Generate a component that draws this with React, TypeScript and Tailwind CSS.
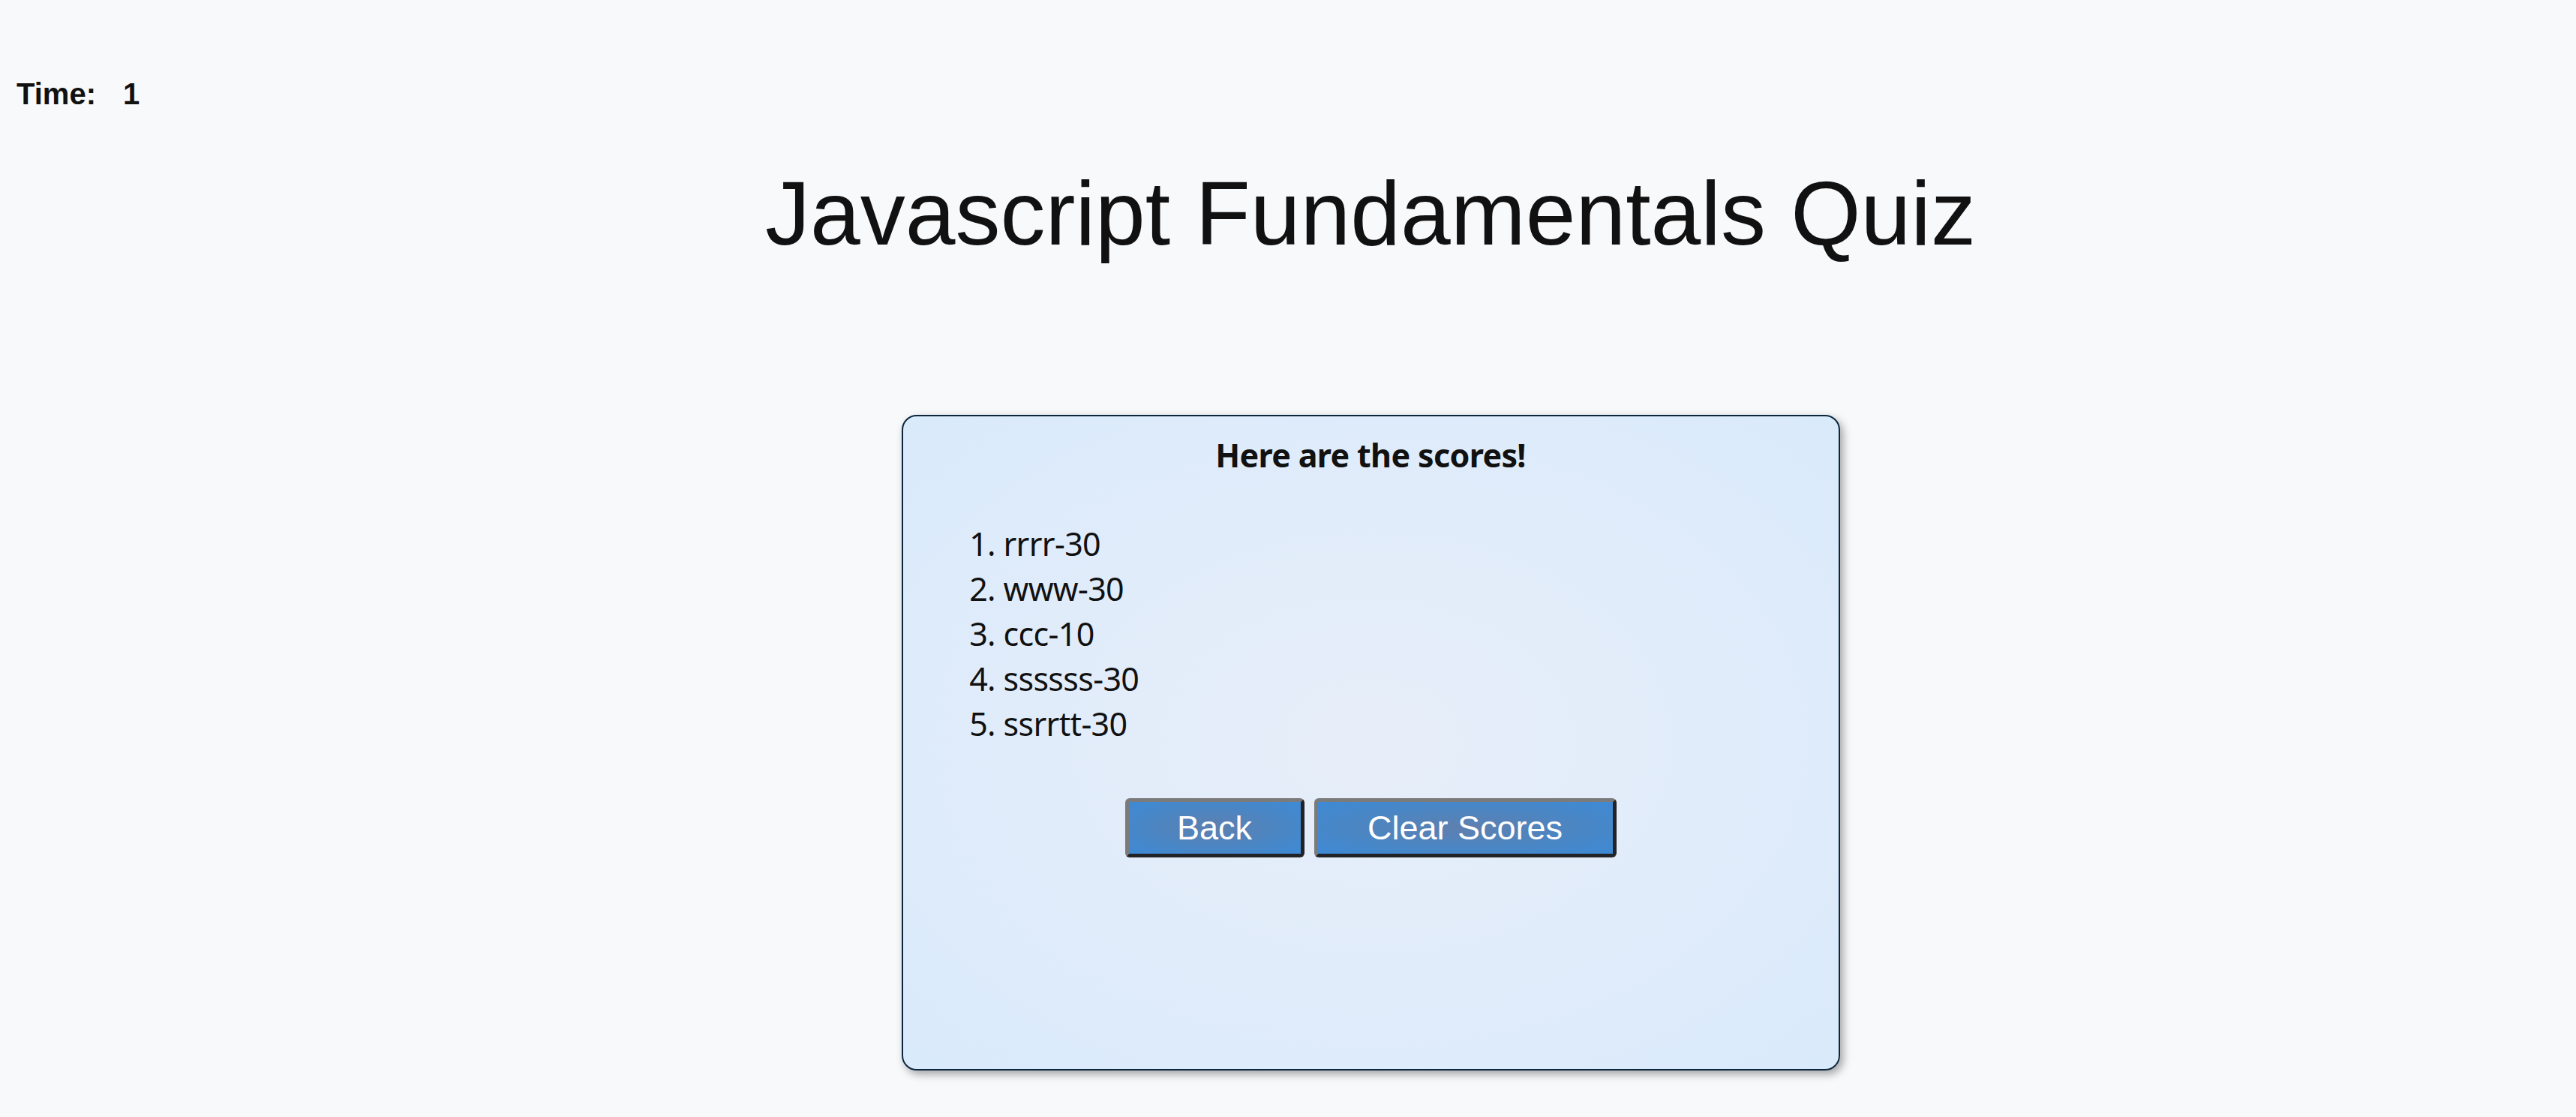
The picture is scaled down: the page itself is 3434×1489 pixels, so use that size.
import React from "react";

const scores = ["rrrr-30", "www-30", "ccc-10", "ssssss-30", "ssrrtt-30"];

const btn =
  "h-[79px] rounded-[6px] border-[5px] border-t-[#7b7b7b] border-l-[#7b7b7b] border-b-[#222326] border-r-[#222326] bg-[radial-gradient(ellipse_at_center,#5f7fae_0%,#4a86c4_55%,#3d8ad6_100%)] text-[45px] leading-[52px] text-white font-['Liberation_Sans',Arial,sans-serif]";

export default function App() {
  return (
    <div className="min-h-screen bg-[#f8f9fb] text-[#111111] font-['Liberation_Sans',Arial,sans-serif]">
      {/* Timer in the corner */}
      <div className="pl-[22px] pt-[102px] text-[40px] font-bold leading-[46px] flex gap-[36px]">
        <span>Time:</span>
        <span>1</span>
      </div>

      <div className="pl-[220px]">
        <h1 className="mt-[67px] text-center text-[120px] leading-[138px] font-normal">
          Javascript Fundamentals Quiz
        </h1>

        {/* Scores card */}
        <div className="mt-[200px] flex justify-center">
          <div className="w-[1251px] h-[874px] rounded-[20px] border-2 border-[#0b2740] bg-[radial-gradient(ellipse_at_center,#e7eef9_0%,#e1ecfa_50%,#d9eafb_100%)] shadow-[4px_5px_12px_rgba(0,0,0,0.35)] pt-[24px] font-['Noto_Sans','Open_Sans',sans-serif]">
            <h2 className="text-center text-[43px] leading-[56px] font-bold tracking-[-0.015em]">
              Here are the scores!
            </h2>
            <ol className="mt-[60px] list-decimal pl-[134px] text-[43px] leading-[60px] tracking-[-0.015em]">
              {scores.map((s) => (
                <li key={s}>{s}</li>
              ))}
            </ol>
            <div className="mt-[69px] flex justify-center gap-[13px]">
              <button className={`${btn} w-[239px]`}>Back</button>
              <button className={`${btn} w-[403px]`}>Clear Scores</button>
            </div>
          </div>
        </div>
      </div>
    </div>
  );
}
